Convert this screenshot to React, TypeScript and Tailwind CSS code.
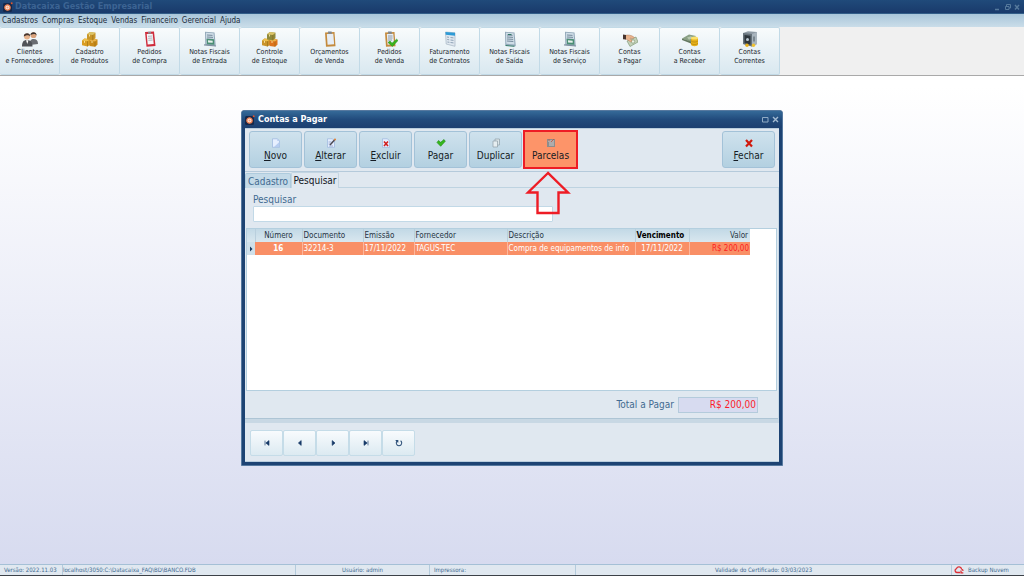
import React, { useState } from "react";

type IconName =
  | "clientes"
  | "caixas"
  | "estoque"
  | "compra"
  | "nota"
  | "prancheta"
  | "pedido"
  | "fatura"
  | "saida"
  | "pagar"
  | "receber"
  | "cofre";

interface Modulo {
  icon: IconName;
  linha1: string;
  linha2: string;
}

const menus = ["Cadastros", "Compras", "Estoque", "Vendas", "Financeiro", "Gerencial", "Ajuda"];

const modulos: Modulo[] = [
  { icon: "clientes", linha1: "Clientes", linha2: "e Fornecedores" },
  { icon: "caixas", linha1: "Cadastro", linha2: "de Produtos" },
  { icon: "compra", linha1: "Pedidos", linha2: "de Compra" },
  { icon: "nota", linha1: "Notas Fiscais", linha2: "de Entrada" },
  { icon: "estoque", linha1: "Controle", linha2: "de Estoque" },
  { icon: "prancheta", linha1: "Orçamentos", linha2: "de Venda" },
  { icon: "pedido", linha1: "Pedidos", linha2: "de Venda" },
  { icon: "fatura", linha1: "Faturamento", linha2: "de Contratos" },
  { icon: "saida", linha1: "Notas Fiscais", linha2: "de Saída" },
  { icon: "nota", linha1: "Notas Fiscais", linha2: "de Serviço" },
  { icon: "pagar", linha1: "Contas", linha2: "a Pagar" },
  { icon: "receber", linha1: "Contas", linha2: "a Receber" },
  { icon: "cofre", linha1: "Contas", linha2: "Correntes" },
];

const Caixas = ({ topo, frente, lado }: { topo: string; frente: string; lado: string }) => (
  <>
    <path d="M0 9.500l2.500-2 5.500.7v5.800l-2.500 1.500L0 14.300z" fill={frente} />
    <path d="M0 9.500l2.500-2 5.500.7-2.500 2z" fill="#eec04c" />
    <path d="M7.500 9.800l2.500-2 5.500.6v5.400L13 15.700l-5.500-.8z" fill={lado} />
    <path d="M7.500 9.800l2.500-2 5.500.6-2.500 2z" fill="#edb44c" />
    <path d="M5 3.200L7.800 1l5.700.7v5.600l-2.700 2L5 8.500z" fill={topo} />
    <path d="M5 3.200L7.800 1l5.700.7-2.700 2.200z" fill="#dcc468" />
    <path d="M10.800 3.900v5.400M5.500 10.200v5.300M13 10.400v5.300" stroke="#8a6010" strokeWidth=".5" />
    <path d="M7.500 3.500v2M2.500 9.800v2M10 10v2" stroke="#fbe7a4" strokeWidth=".9" />
  </>
);

const Prancheta = ({ cor }: { cor: string }) => (
  <>
    <path d="M3 1.500l9.500-.5 1 14.200-9.500.5z" fill={cor} />
    <path d="M4.800 3l6.500-.3.8 10.600-6.500.5z" fill="#e6edf5" />
    <path d="M6 .6h3.600l.3 2.200H6.200z" fill="#7c858f" />
  </>
);

const ModuloIcon = ({ name }: { name: IconName }) => (
  <svg viewBox="0 0 16 16" className="size-4" aria-hidden="true">
    {name === "clientes" && (
      <>
        <path d="M8 14c0-4 .5-6 3.500-6S16 9.500 16 13z" fill="#6a6d73" />
        <circle cx="11.500" cy="4.200" r="2.900" fill="#d9a27c" />
        <path d="M8.500 4C8 .5 14.800-.3 14.600 4.500c-.9-1.800-3-2-6.100-.5z" fill="#35302e" />
        <path d="M0 15.500C0 11 1.500 9 5 9s5.500 2 5.500 6.500z" fill="#505359" />
        <path d="M4 9.200h2.500L5.300 13z" fill="#fff" />
        <circle cx="5" cy="5.500" r="3" fill="#e5b28c" />
        <path d="M1.800 5.500C1.500 1.500 8.500 1 8.200 5.500 7 3.800 5 3.800 1.800 5.500z" fill="#453630" />
      </>
    )}
    {name === "caixas" && <Caixas topo="#c8962a" frente="#d99d22" lado="#c98a18" />}
    {name === "estoque" && <Caixas topo="#8f8a3c" frente="#c9942a" lado="#dd741c" />}
    {name === "compra" && (
      <>
        <path d="M3 1l9-.5 1.500 14.500-9 .7z" fill="#cf2c3c" />
        <path d="M4.700 3l6-.3 1 10.300-6 .5z" fill="#f5f6f8" />
        <path d="M6 5.300l4.300-.3M6.200 7.300l4.300-.3M6.400 9.300l4.300-.3" stroke="#9aa3af" strokeWidth=".8" />
        <path d="M6 .8h3v1.800H6z" fill="#868b92" />
      </>
    )}
    {(name === "nota" || name === "saida") && (
      <>
        <path d="M3 .8l9.500.7 1.300 13.700L3.300 14z" fill="#93a9ba" />
        <path d="M4 1.800l7.600.5.9 11.300-8.200-.9z" fill="#cfdde7" />
        <path d="M5 4l5.500.4M5 6l6 .4M5 8l6.200.4M5 10l6.300.5" stroke="#6b8193" strokeWidth=".9" />
        {name === "nota" ? (
          <>
            <path d="M4.500 7.800l7.500.5.4 5.500-7.500-.6z" fill="#4b8f75" />
            <path d="M6 9.300l4.700.4v2L6.100 11.500z" fill="#e8f1ed" />
            <path d="M2 13.800l12 1.200" stroke="#7f91a0" strokeWidth="1.200" />
          </>
        ) : (
          <path d="M6 3.500h3.500M3.500 14.500l9 .8" stroke="#2f7565" strokeWidth="1" />
        )}
      </>
    )}
    {name === "prancheta" && <Prancheta cor="#c48a3c" />}
    {name === "pedido" && (
      <>
        <Prancheta cor="#c48a3c" />
        <path d="M6 5h4.500M6 7h4.500M6 9h4" stroke="#8793a0" strokeWidth=".9" />
        <path d="M6 11.500l2-1.500 2 2.200 4.600-4L16 9.500l-5.600 6z" fill="#39b51d" stroke="#1e8410" strokeWidth=".5" />
      </>
    )}
    {name === "fatura" && (
      <>
        <path d="M3.500 1l9.500.8v13.500L4.200 13z" fill="#e0e8f0" stroke="#a4b3c1" strokeWidth=".7" />
        <path d="M3.500 1l9.500.8v3l-9.300-1z" fill="#2e9bd6" />
        <path d="M5 6l2 .3M8.500 6.500l3 .4M5.200 8.500l2 .3M8.500 9l3 .4M5.400 11l2 .3M8.500 11.500l3 .4" stroke="#8fa3b6" strokeWidth="1" />
      </>
    )}
    {name === "pagar" && (
      <>
        <path d="M5 10l9-4 2 5-8 4.500z" fill="#c3d0b8" stroke="#75906c" strokeWidth=".6" />
        <circle cx="11" cy="10.500" r="1.700" fill="#eef3e8" stroke="#75906c" strokeWidth=".6" />
        <path d="M3 4.500c3-1 6.500-.5 9.500 2l-2 1.300L8 7l2 3-1.200 1L5 8.500 3 8z" fill="#e9b48e" stroke="#a86f4a" strokeWidth=".4" />
        <path d="M1 3.500l3 .5v4.500l-3-.3z" fill="#47352f" />
      </>
    )}
    {name === "receber" && (
      <>
        <path d="M0 7.500L7 3.500l7 1.500-5 6z" fill="#8aa085" />
        <path d="M0 7.500v1.500l9 3.500v-2z" fill="#63785f" />
        <path d="M5 6.500l4-1.200 2 1.500-4 2z" fill="#b7c8ae" />
        <path d="M9 7v6.500c0 2.200 7 2.200 7 0V7z" fill="#e7b21b" />
        <ellipse cx="12.500" cy="7" rx="3.500" ry="1.600" fill="#fbe06a" />
        <path d="M9 9.500c0 2 7 2 7 0M9 12c0 2 7 2 7 0" fill="none" stroke="#a9780a" strokeWidth=".6" />
      </>
    )}
    {name === "cofre" && (
      <>
        <path d="M1 2l5-1.700L15 1v12l-5 2.500L1 13z" fill="#8e9aa4" />
        <path d="M1 2l9 1v12.500L1 13z" fill="#66727b" />
        <path d="M2.500 4l6 .7v9L2.500 12z" fill="#2d363d" />
        <path d="M10 3l5-2v12l-5 2.500z" fill="#a9b5be" />
        <path d="M12 5.500v5" stroke="#4b5861" />
        <circle cx="5.500" cy="8.500" r="1.500" fill="#b9c7d1" />
        <circle cx="5" cy="14.200" r="1.700" fill="#e9b21c" />
        <circle cx="11.500" cy="14.300" r="1.700" fill="#f0c22f" />
      </>
    )}
  </svg>
);

const Logo = () => (
  <svg viewBox="0 0 10 10" className="size-[10px] shrink-0" aria-hidden="true">
    <rect x="0" y="1" width="9" height="9" rx="1.500" fill="#16284a" />
    <circle cx="4.500" cy="5.500" r="2.700" fill="#fbe3d6" stroke="#e8794a" strokeWidth="1.200" />
    <circle cx="4.500" cy="5.500" r="1" fill="#f0a27e" />
    <circle cx="8.700" cy="1.300" r="1" fill="#e0562c" />
  </svg>
);

type AcaoName = "novo" | "alterar" | "excluir" | "pagar" | "duplicar" | "parcelas" | "fechar";

const AcaoIcon = ({ name }: { name: AcaoName }) => (
  <svg viewBox="0 0 10 10" className="size-[10px]" aria-hidden="true">
    {(name === "novo" || name === "alterar" || name === "excluir") && (
      <path d="M1.500.8h5L8.500 3v6.300h-7z" fill="#e6efff" stroke="#9ab4dc" strokeWidth=".7" />
    )}
    {name === "novo" && <path d="M6.300.8V3h2.200zM3 9L8.300 4v5z" fill="#b6cdf0" />}
    {name === "alterar" && (
      <>
        <path d="M2.500 4h3M2.500 6h2M3 8h4" stroke="#7e93c0" strokeWidth=".7" />
        <path d="M4 7L8.500 2" stroke="#4c4a55" strokeWidth="1.500" />
        <circle cx="9" cy="1.500" r="1" fill="#e07b2d" />
      </>
    )}
    {name === "excluir" && <path d="M3 3.500l4 4.500M7 3.500L3 8" stroke="#d11f1f" strokeWidth="1.600" />}
    {name === "pagar" && (
      <path d="M1 4.500l1.500-2L4.700 4.300 8 1.500l1.300 1.700L4.700 8.300z" fill="#35b81c" stroke="#1f8612" strokeWidth=".6" />
    )}
    {name === "duplicar" && (
      <>
        <path d="M4 1h4.500v6H4z" fill="#dce6ea" stroke="#8f9fa7" strokeWidth=".7" />
        <path d="M2 3h4.500v6H2z" fill="#e6eef1" stroke="#8f9fa7" strokeWidth=".7" />
      </>
    )}
    {name === "parcelas" && (
      <>
        <rect x="1" y="1" width="8" height="8" fill="#8e8c8c" />
        <path d="M2 3h6M3 5h5M3 7h5" stroke="#d8d4d2" strokeWidth=".9" />
        <path d="M5 4l3-3M2 2h2" stroke="#c2503c" strokeWidth=".8" />
      </>
    )}
    {name === "fechar" && <path d="M2 2l6 6.500M8 2L2 8.500" stroke="#d0180c" strokeWidth="2.200" />}
  </svg>
);

const acoes: { icon: AcaoName; label: string; atalho: boolean }[] = [
  { icon: "novo", label: "Novo", atalho: true },
  { icon: "alterar", label: "Alterar", atalho: true },
  { icon: "excluir", label: "Excluir", atalho: true },
  { icon: "pagar", label: "Pagar", atalho: false },
  { icon: "duplicar", label: "Duplicar", atalho: false },
  { icon: "parcelas", label: "Parcelas", atalho: false },
];

const AcaoButton = ({ icon, label, atalho }: { icon: AcaoName; label: string; atalho: boolean }) => (
  <button
    type="button"
    className={`flex h-[37px] w-[53px] flex-col items-center gap-[1px] border pt-[6px] text-[10px] leading-[13px] text-[#151c24] ${
      icon === "parcelas"
        ? "border-[#fd9469] bg-[#fd9469] outline-2 -outline-offset-1 outline-[#ee1c25]"
        : "rounded-[3px] border-[#a3c2d8] bg-linear-to-b from-[#cfe2ed] to-[#b3d0e1]"
    }`}
  >
    <AcaoIcon name={icon} />
    {atalho ? (
      <span>
        <u>{label[0]}</u>
        {label.slice(1)}
      </span>
    ) : (
      <span>{label}</span>
    )}
  </button>
);

const navegacao = [
  { label: "Primeiro", d: "M2.500 2v6M7.500 2v6L3.500 5z" },
  { label: "Anterior", d: "M6.500 2v6L3 5z" },
  { label: "Próximo", d: "M4 2v6l3.500-3z" },
  { label: "Último", d: "M7.500 2v6M2.500 2v6l4-3z" },
];

const ContasAPagar = () => {
  const [busca, setBusca] = useState("");

  return (
    <section
      aria-label="Contas a Pagar"
      className="w-[542px] rounded-t-[3px] border border-[#56799f] bg-[#1d4373] text-[#426b91]"
    >
      <header className="flex h-[17px] items-center gap-[3px] rounded-t-[2px] bg-linear-to-b from-[#356a98] via-[#214b7c] to-[#1c3f70] px-[3px]">
        <Logo />
        <h2 className="flex-1 text-[9px] font-bold text-white">Contas a Pagar</h2>
        <button type="button" aria-label="Maximizar">
          <svg viewBox="0 0 7 7" className="size-[7px]">
            <path d="M.5 1.500h5.500v4.500H.5z" fill="none" stroke="#8fabc5" />
          </svg>
        </button>
        <button type="button" aria-label="Fechar janela">
          <svg viewBox="0 0 7 7" className="size-[7px]">
            <path d="M1 1l5 5M6 1L1 6" stroke="#a4bbd1" strokeWidth="1.400" />
          </svg>
        </button>
      </header>

      <div className="mx-[3px] mb-[3px] border-y border-[#b9cddd] bg-[#e0e8f0]">
        <div className="flex justify-between border-b border-[#b5cadb] px-1 pt-[2px] pb-[3px]">
          <div className="flex gap-[2px]">
            {acoes.map((acao) => (
              <AcaoButton key={acao.label} {...acao} />
            ))}
          </div>
          <AcaoButton icon="fechar" label="Fechar" atalho />
        </div>

        <div role="tablist" className="flex items-end text-[10px] leading-[13px]">
          <button
            type="button"
            role="tab"
            aria-selected="false"
            className="h-[15px] w-[46px] rounded-t-[2px] border border-b-0 border-[#aecbdd] bg-[#c4dae8]"
          >
            Cadastro
          </button>
          <button
            type="button"
            role="tab"
            aria-selected="true"
            className="h-4 w-12 rounded-t-[2px] border border-b-0 border-[#c3d5e2] text-[#10161d]"
          >
            Pesquisar
          </button>
          <div className="flex-1 border-b border-[#bed3e1]" />
        </div>

        <div role="tabpanel" className="border-r border-b-4 border-[#c8d8e4]">
          <div className="relative flex flex-col px-2 py-[6px]">
            <label htmlFor="busca" className="text-[10px] leading-[12px]">
              Pesquisar
            </label>
            <input
              id="busca"
              value={busca}
              onChange={(e) => setBusca(e.target.value)}
              className="h-4 w-[300px] rounded-[1px] border border-[#c2d9e7] bg-white px-1 text-[9px] outline-none"
            />
            <svg viewBox="0 0 46 44" className="absolute -top-[17px] left-[280px] h-11 w-[46px]" aria-hidden="true">
              <path d="M23 2L3 21.500h9.500V42h21V21.500H43z" fill="none" stroke="#ee1c25" strokeWidth="2.400" />
            </svg>
          </div>

          <div className="mx-px h-[163px] border border-[#b4cfdf] bg-white">
            <table className="w-[503px] table-fixed border-collapse text-[8px] leading-[12px]">
              <colgroup>
                <col className="w-2" />
                <col className="w-[47px]" />
                <col className="w-[61px]" />
                <col className="w-[51px]" />
                <col className="w-[93px]" />
                <col className="w-[128px]" />
                <col className="w-[54px]" />
                <col className="w-[61px]" />
              </colgroup>
              <thead>
                <tr className="h-[13px] bg-linear-to-b from-[#c2d9e6] to-[#d9e7ef] text-left text-[#273544]">
                  <th className="border-r border-[#b9cfdd]" />
                  <th className="border-r border-[#b9cfdd] text-center font-normal">Número</th>
                  <th className="border-r border-[#b9cfdd] pl-px font-normal">Documento</th>
                  <th className="border-r border-[#b9cfdd] pl-px font-normal">Emissão</th>
                  <th className="border-r border-[#b9cfdd] pl-px font-normal">Fornecedor</th>
                  <th className="border-r border-[#b9cfdd] pl-px font-normal">Descrição</th>
                  <th className="border-r border-[#b9cfdd] pl-px font-bold whitespace-nowrap text-black">Vencimento</th>
                  <th className="pr-[2px] text-right font-normal">Valor</th>
                </tr>
              </thead>
              <tbody>
                <tr className="h-[13px] bg-[#f98f66] whitespace-nowrap text-white">
                  <td className="bg-[#cfe0ea]">
                    <svg viewBox="0 0 8 8" className="size-2" aria-hidden="true">
                      <path d="M3 1.500v5L5.500 4z" fill="#17375e" />
                    </svg>
                  </td>
                  <td className="border-r border-[#fcb79c] text-center font-bold">16</td>
                  <td className="border-r border-[#fcb79c] pl-px">32214-3</td>
                  <td className="border-r border-[#fcb79c] pl-px">17/11/2022</td>
                  <td className="border-r border-[#fcb79c] pl-px">TAGUS-TEC</td>
                  <td className="overflow-hidden border-r border-[#fcb79c] pl-px">Compra de equipamentos de info</td>
                  <td className="border-r border-[#fcb79c] text-center">17/11/2022</td>
                  <td className="pr-px text-right text-[#fb1d1d]">R$ 200,00</td>
                </tr>
              </tbody>
            </table>
          </div>

          <div className="flex h-7 items-center justify-end gap-1 border-b border-[#aec5d5] pr-5 text-[10px]">
            <label htmlFor="total">Total a Pagar</label>
            <input
              id="total"
              readOnly
              value="R$ 200,00"
              className="h-4 w-20 border border-[#b4cbdc] bg-[#d7dbf0] px-px text-right text-[10px] text-[#fb1d2b] outline-none"
            />
          </div>
        </div>

        <div className="flex px-[5px] pt-[7px] pb-[5px]">
          {navegacao.map((nav) => (
            <button
              key={nav.label}
              type="button"
              aria-label={nav.label}
              className="flex h-[26px] w-[33px] items-center justify-center rounded-[2px] border border-[#c5dce8] bg-linear-to-b from-[#f8fbfd] to-[#dceaf1]"
            >
              <svg viewBox="0 0 10 10" className="size-2">
                <path d={nav.d} fill="#173a68" stroke="#173a68" strokeWidth=".8" />
              </svg>
            </button>
          ))}
          <button
            type="button"
            aria-label="Atualizar"
            className="flex h-[26px] w-[33px] items-center justify-center rounded-[2px] border border-[#c5dce8] bg-linear-to-b from-[#f8fbfd] to-[#dceaf1]"
          >
            <svg viewBox="0 0 10 10" className="size-2" fill="none" stroke="#2c4f78" strokeWidth="1.300">
              <path d="M3 2.200A3.400 3.400 0 1 0 7 2.200M.8 1.800h2.700v2.700" />
            </svg>
          </button>
        </div>
      </div>
    </section>
  );
};

const App: React.FC = () => {
  return (
    <div className="relative flex min-h-screen flex-col bg-linear-to-b from-white from-15% to-[#d6daef] font-['DejaVu_Sans_Condensed','DejaVu_Sans',sans-serif]">
      <header className="flex h-[14px] items-center gap-[2px] border-b border-[#315d88] bg-linear-to-b from-[#204a7a] to-[#193a6b] px-[3px]">
        <Logo />
        <h1 className="flex-1 text-[9px] font-bold text-[#3c6493]">Datacaixa Gestão Empresarial</h1>
        <svg viewBox="0 0 27 8" className="h-2 w-[27px]" fill="none" stroke="#55799c" aria-hidden="true">
          <path d="M1 6.500h4" strokeWidth="1.500" />
          <path d="M11.500 3.500h3.500v3h-3.500zM12.500 3V1.500h4V5H15" />
          <path d="M21 2l4 4.500M25 2l-4 4.500" strokeWidth="1.400" />
        </svg>
      </header>

      <nav className="flex h-[13px] items-center gap-1 bg-linear-to-b from-[#a9c6da] to-[#cadde9] px-[2px] text-[8px] text-[#1c2b3a]">
        {menus.map((menu) => (
          <button key={menu} type="button">
            {menu}
          </button>
        ))}
      </nav>

      <div className="flex h-[49px] border-b border-[#a9a9a9] bg-[#f0f0f0]">
        {modulos.map((modulo, index) => (
          <button
            key={index}
            type="button"
            className="flex w-[60px] flex-col items-center gap-px rounded-[2px] border border-l-0 border-[#c2dae7] bg-linear-to-b from-[#f8fbfc] to-[#d9e8f0] pt-[3px] text-[7px] leading-[9px] whitespace-nowrap text-[#20262c]"
          >
            <ModuloIcon name={modulo.icon} />
            <span>
              {modulo.linha1}
              <br />
              {modulo.linha2}
            </span>
          </button>
        ))}
      </div>

      <main className="absolute inset-0 flex items-center justify-center">
        <ContasAPagar />
      </main>

      <footer className="mt-auto flex h-3 items-center border-t border-b border-t-[#a5c0d6] border-b-[#3c4148] bg-[#e0e8f0] text-[6px] leading-[10px] whitespace-nowrap text-[#426b91]">
        <span className="w-[62px] pl-1">Versão: 2022.11.03</span>
        <span className="w-[234px] border-x border-[#b4cbdc]">localhost/3050:C:\Datacaixa_FAQ\BD\BANCO.FDB</span>
        <span className="w-[133px] text-center">Usuário: admin</span>
        <span className="w-[147px] border-x border-[#b4cbdc] pl-1">Impressora:</span>
        <span className="flex-1 text-center">Validade do Certificado: 03/03/2023</span>
        <span className="flex w-[73px] items-center gap-1 border-l border-[#b4cbdc] pl-[2px]">
          <svg viewBox="0 0 10 8" className="h-2 w-[10px]" fill="none" stroke="#dc2f36" strokeWidth="1.300" aria-hidden="true">
            <path d="M6 6.500H2.800a2 2 0 0 1-.3-3.900A2.700 2.700 0 0 1 7.600 3a2 2 0 0 1 1.400 2M7 4.500v2.300h2.300" />
          </svg>
          Backup Nuvem
        </span>
      </footer>
    </div>
  );
};

export default App;
